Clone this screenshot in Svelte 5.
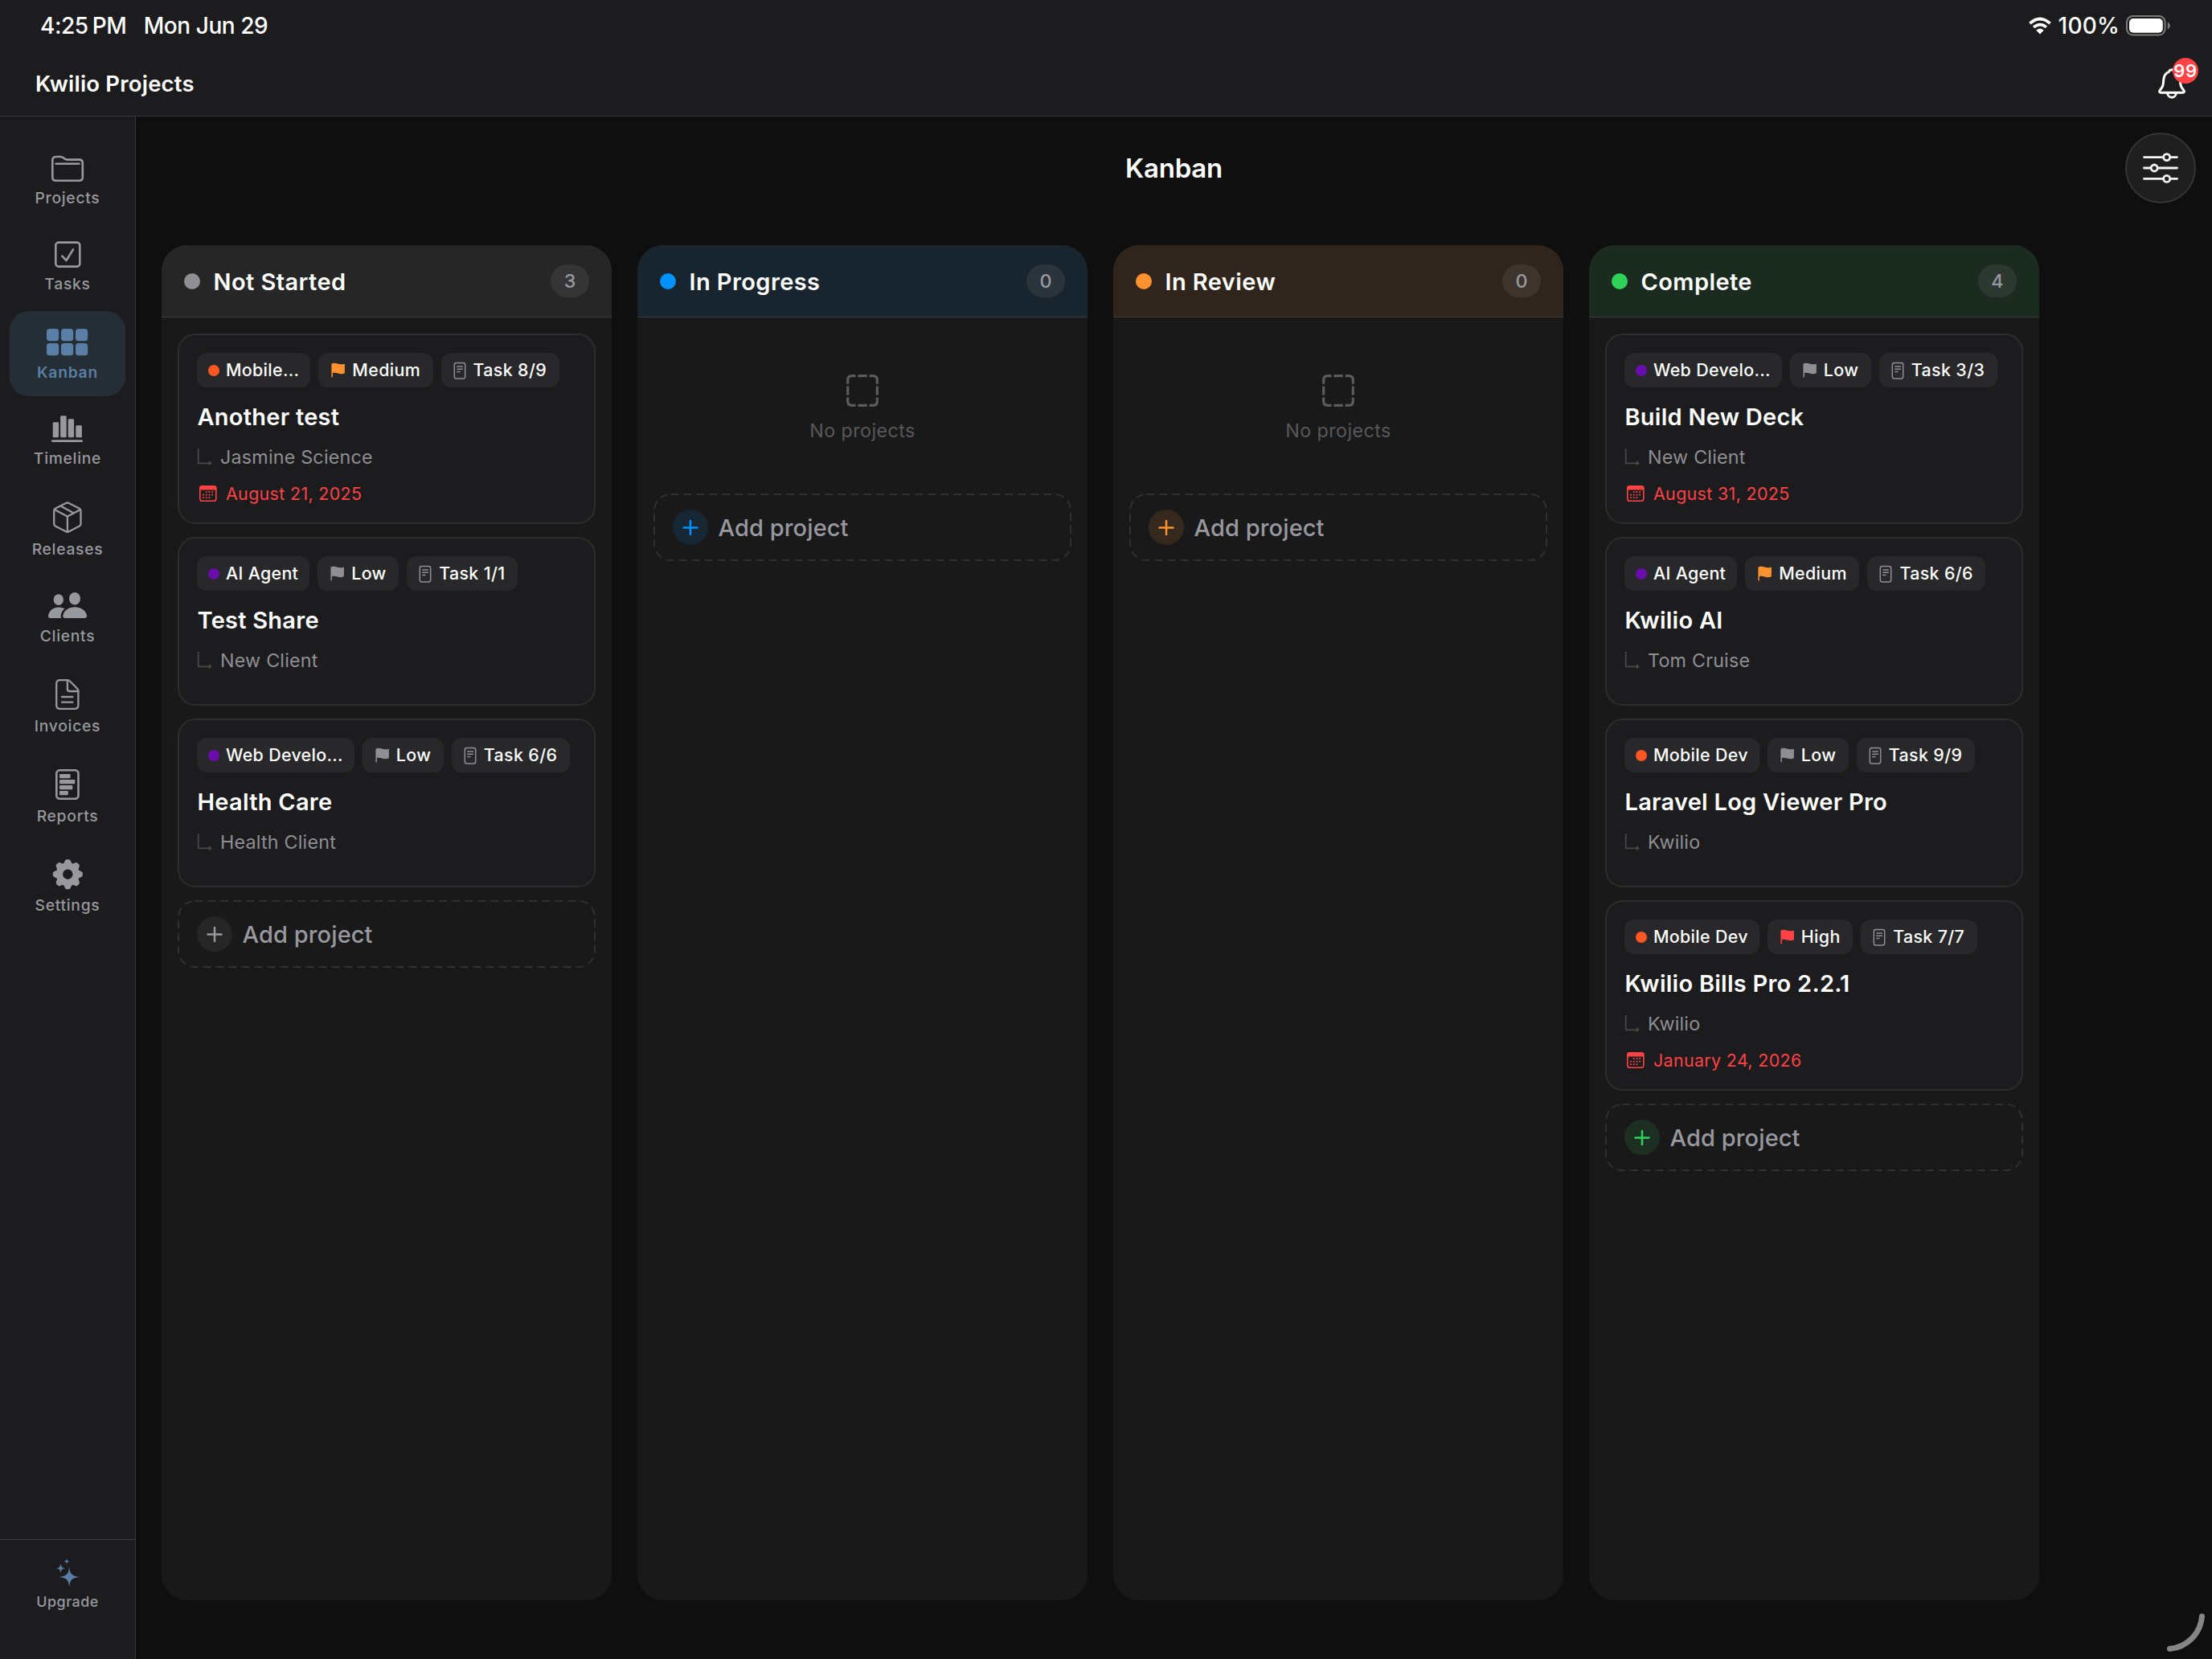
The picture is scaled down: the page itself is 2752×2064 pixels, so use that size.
<script>
	const navItems = [
		{ id: 'projects', label: 'Projects', h: 41 },
		{ id: 'tasks', label: 'Tasks', h: 42 },
		{ id: 'kanban', label: 'Kanban', h: 45 },
		{ id: 'timeline', label: 'Timeline', h: 42 },
		{ id: 'releases', label: 'Releases', h: 48 },
		{ id: 'clients', label: 'Clients', h: 43 },
		{ id: 'invoices', label: 'Invoices', h: 47 },
		{ id: 'reports', label: 'Reports', h: 47 },
		{ id: 'settings', label: 'Settings', h: 46 }
	];

	const ORANGE = '#ff5722';
	const PURPLE = '#6a0dad';

	const columns = [
		{
			name: 'Not Started',
			tone: 'gray',
			projects: [
				{ category: 'Mobile...', color: ORANGE, priority: 'Medium', tasks: '8/9', title: 'Another test', client: 'Jasmine Science', due: 'August 21, 2025' },
				{ category: 'AI Agent', color: PURPLE, priority: 'Low', tasks: '1/1', title: 'Test Share', client: 'New Client' },
				{ category: 'Web Develo...', color: PURPLE, priority: 'Low', tasks: '6/6', title: 'Health Care', client: 'Health Client' }
			]
		},
		{ name: 'In Progress', tone: 'blue', projects: [] },
		{ name: 'In Review', tone: 'orange', projects: [] },
		{
			name: 'Complete',
			tone: 'green',
			projects: [
				{ category: 'Web Develo...', color: PURPLE, priority: 'Low', tasks: '3/3', title: 'Build New Deck', client: 'New Client', due: 'August 31, 2025' },
				{ category: 'AI Agent', color: PURPLE, priority: 'Medium', tasks: '6/6', title: 'Kwilio AI', client: 'Tom Cruise' },
				{ category: 'Mobile Dev', color: ORANGE, priority: 'Low', tasks: '9/9', title: 'Laravel Log Viewer Pro', client: 'Kwilio' },
				{ category: 'Mobile Dev', color: ORANGE, priority: 'High', tasks: '7/7', title: 'Kwilio Bills Pro 2.2.1', client: 'Kwilio', due: 'January 24, 2026' }
			]
		}
	];

	const gearTeeth = [0, 45, 90, 135, 180, 225, 270, 315];

	// day dots in the calendar glyph
	const calendarDays = [
		[7.8, 7.2], [11.5, 7.2], [15.2, 7.2],
		[4.1, 10.8], [7.8, 10.8], [11.5, 10.8], [15.2, 10.8],
		[4.1, 14.3], [7.8, 14.3], [11.5, 14.3]
	];

	let active = $state('kanban');
</script>

{#snippet navIcon(id)}
	{#if id === 'projects'}
		<g class="line">
			<path d="M11.3 9.5Q11.3 5 15.6 5h5.6c1.6 0 2.5.4 3.6 1.3l1.5 1.2c1 .8 2 1.1 3.3 1.1h15q4.2 0 4.2 4.2v17.7q0 4.2-4.3 4.2H15.6q-4.3 0-4.3-4.2z" />
			<path d="M15.5 13.8h29" />
		</g>
	{:else if id === 'tasks'}
		<g class="line">
			<rect x="15.3" y="5.6" width="30" height="30" rx="3.6" />
			<path d="M23.3 22.6l5.2 5.4 8.5-13.6" />
		</g>
	{:else if id === 'kanban'}
		{#each [6, 24] as y}
			{#each [4, 22, 40] as x}
				<rect {x} {y} width="15.2" height="15.2" rx="3.8" />
			{/each}
		{/each}
	{:else if id === 'timeline'}
		<rect x="11.7" y="12.3" width="7.4" height="19" rx="1.4" />
		<rect x="21.1" y="4.3" width="7.6" height="27" rx="1.4" />
		<rect x="30.7" y="8.3" width="7.4" height="23" rx="1.4" />
		<rect x="40.3" y="16.3" width="7.6" height="15" rx="1.4" />
		<rect x="10" y="34.2" width="39" height="2.8" rx="1.2" />
	{:else if id === 'releases'}
		<g class="line thin">
			<path d="M27.9 6q2-1 4 0L45 12.8q1.5.8 1.5 2.6v16.4q0 1.8-1.6 2.7L31.9 41.3q-2 1-4 0L14.8 34.5q-1.6-.9-1.6-2.7V15.4q0-1.8 1.5-2.6z" />
			<path d="M13.8 14l16.1 8.6L46 14M29.9 22.6V42M21.8 9.8l16.2 8.6" />
		</g>
	{:else if id === 'clients'}
		<ellipse cx="18.8" cy="13.1" rx="6.2" ry="6.8" />
		<ellipse cx="39" cy="11.7" rx="7" ry="7.8" />
		<path d="M8.5 36Q6 36 6 33.8C6 28.5 11.2 22.5 19 22.5q4.2 0 7.6 1.8C23.2 27 21.4 30.6 21.6 34q0 1 .6 2z" />
		<path d="M27 36q-2.7 0-2.7-2.4C24.3 28.5 30 22.3 39.1 22.3S54 28.5 54 33.6Q54 36 51.3 36z" />
	{:else if id === 'invoices'}
		<g class="line thin">
			<path d="M20.8 5.2h9q1.9 0 3.2 1.3l9 9q1.4 1.4 1.4 3.2v17.5q0 4.6-4.6 4.6h-18q-4.6 0-4.6-4.6V9.8q0-4.6 4.6-4.6z" />
			<path d="M29.9 5.4v11q0 2.6 2.6 2.6h10.8M23 26h13.4M23 32.6h13.4" />
		</g>
	{:else if id === 'reports'}
		<rect class="line" x="16.3" y="5.3" width="27.2" height="35.4" rx="4" />
		<rect x="20" y="10" width="13.6" height="5.2" rx="1" />
		<rect x="20" y="17" width="19.3" height="5.2" rx="1" />
		<rect x="20" y="24" width="16.3" height="5.2" rx="1" />
		<rect x="20" y="31" width="10.8" height="5.2" rx="1" />
	{:else if id === 'settings'}
		<g transform="translate(30.3 22.7)">
			<circle r="10.3" fill="none" stroke="currentColor" stroke-width="8.2" />
			{#each gearTeeth as angle}
				<path transform="rotate({angle})" d="M-5.6-12.5L-3.4-17Q-2.8-18.5-1.4-18.5H1.4Q2.8-18.5 3.4-17L5.6-12.5z" />
			{/each}
		</g>
	{/if}
{/snippet}

{#snippet flag()}
	<svg class="flag" width="20" height="20" viewBox="0 0 20 20">
		<path d="M2.4 2.2C2.4 1.4 4.1.8 6.1.8c3.3 0 5 1.5 8.4 1.5 1.4 0 2.6-.3 3.4-.6.6-.2 1 .1 1 .7v10.2c0 .9-1.7 1.7-4.1 1.7-3.5 0-5.3-1.5-8.5-1.5-1.1 0-1.9.2-2.4.3v4.7a.75.75 0 0 1-1.5 0z" />
	</svg>
{/snippet}

{#snippet addProject(tone)}
	<button class="add {tone}">
		<svg class="dashes" width="520" height="84">
			<rect x="1" y="1" width="518" height="82" rx="20" />
		</svg>
		<span class="add-icon">
			<svg width="20" height="20" viewBox="0 0 20 20"><path d="M10 2v17M1.5 10.5h17" /></svg>
		</span>
		<span>Add project</span>
	</button>
{/snippet}

<div class="app">
	<header class="top">
		<div class="status-bar">
			<div class="clock">
				<span>4:25<span class="meridiem">PM</span></span>
				<span>Mon Jun 29</span>
			</div>
			<div class="system">
				<svg width="30" height="22" viewBox="0 0 30 22">
					<path d="M15 21l-4.2-4.2Q15 13.2 19.2 16.8z" fill="#fff" stroke="#fff" stroke-width="1" stroke-linejoin="round" />
					<path d="M7.1 12.9Q15 6.2 22.9 12.9M2.4 8.2Q15-3.2 27.6 8.2" fill="none" stroke="#fff" stroke-width="3.7" />
				</svg>
				<span>100%</span>
				<svg width="55" height="26" viewBox="0 0 55 26">
					<rect x="1" y="1" width="47.6" height="23.6" rx="7.5" fill="none" stroke="#7b7b7d" stroke-width="2" />
					<rect x="4" y="4" width="41.8" height="17.8" rx="5" fill="#fff" />
					<path d="M51.8 8.6q3 1.4 3 4.3t-3 4.3z" fill="#7b7b7d" />
				</svg>
			</div>
		</div>
		<div class="app-bar">
			<h1>Kwilio Projects</h1>
			<button class="bell" aria-label="Notifications">
				<svg width="36" height="40" viewBox="0 0 36 40">
					<path d="M18 2.7c-1.9 0-3.1 1-3.6 2.7C10 7 8 10.8 7.7 15.6 7.4 22 6.7 24.2 3.6 27.7c-1.7 2-1.2 3.5 1 3.5h26.8c2.2 0 2.7-1.5 1-3.5-3.1-3.5-3.8-5.7-4.1-12.1C28 10.8 26 7 21.6 5.4 21.1 3.7 19.9 2.7 18 2.7z" />
					<path d="M12.7 31.4c0 3.4 2.3 5.8 5.3 5.8s5.3-2.4 5.3-5.8" />
				</svg>
				<span class="badge">99</span>
			</button>
		</div>
	</header>

	<div class="body">
		<aside>
			<nav>
				{#each navItems as item}
					<button class="nav-item" class:active={active === item.id} onclick={() => (active = item.id)}>
						<svg width="60" height={item.h} viewBox="0 0 60 {item.h}">{@render navIcon(item.id)}</svg>
						<span>{item.label}</span>
					</button>
				{/each}
			</nav>
			<button class="upgrade">
				<svg width="32" height="38" viewBox="0 0 32 38">
					<path d="M18.2 11.3c.9 9 3.2 11.6 12.5 12.6-9.3 1-11.6 3.6-12.5 12.6-.9-9-3.2-11.6-12.5-12.6 9.3-1 11.6-3.6 12.5-12.6z" />
					<path d="M7.5 6.9c.5 4.3 1.7 5.7 6.2 6.2-4.5.5-5.7 1.9-6.2 6.2-.5-4.3-1.7-5.7-6.2-6.2 4.5-.5 5.7-1.9 6.2-6.2z" />
					<path d="M15.1.5c.3 2.9 1.1 3.7 4 4-2.9.3-3.7 1.1-4 4-.3-2.9-1.1-3.7-4-4 2.9-.3 3.7-1.1 4-4z" />
				</svg>
				<span>Upgrade</span>
			</button>
		</aside>

		<main>
			<div class="title-bar">
				<h2>Kanban</h2>
				<button class="filter" aria-label="Filter">
					<svg width="44" height="38" viewBox="0 0 44 38">
						<path d="M1.5 5.6h22.9M35 5.6h7.5M1.5 19h7.4M19.5 19h23M1.5 32.4h22.9M35 32.4h7.5" />
						<circle cx="29.7" cy="5.6" r="4" />
						<circle cx="14.2" cy="19" r="4" />
						<circle cx="29.7" cy="32.4" r="4" />
					</svg>
				</button>
			</div>

			<div class="board">
				{#each columns as column}
					<section class="column">
						<header class="column-head {column.tone}">
							<span class="dot"></span>
							<h3>{column.name}</h3>
							<span class="count">{column.projects.length}</span>
						</header>

						<div class="cards">
							{#each column.projects as project}
								<article class="card">
									<div class="chips">
										<span class="chip category">
											<span class="swatch" style="background: {project.color}"></span>
											<span class="chip-text">{project.category}</span>
										</span>
										<span class="chip {project.priority.toLowerCase()}">
											{@render flag()}
											<span class="chip-text">{project.priority}</span>
										</span>
										<span class="chip">
											<svg width="18" height="22" viewBox="0 0 18 22" class="task-icon">
												<rect x="2.3" y="1.5" width="13.4" height="19.4" rx="2.4" />
												<path d="M5.3 6h7.6M5.3 9.3h7.6M5.3 12.6h4.2" />
											</svg>
											<span class="chip-text">Task {project.tasks}</span>
										</span>
									</div>
									<h4>{project.title}</h4>
									<div class="client">
										<svg width="20" height="22" viewBox="0 0 20 22">
											<path d="M1.7 0v18.3h14" />
											<path class="tip" d="M15 15l3.8 3.3L15 21.6z" />
										</svg>
										{project.client}
									</div>
									{#if project.due}
										<div class="due">
											<svg width="22" height="20" viewBox="0 0 22 20">
												<rect x=".8" y=".8" width="20" height="18.4" rx="2.8" />
												<path class="solid" d="M.8 4.6V3.5Q.8.8 3.5.8h14.6q2.7 0 2.7 2.7v1.1z" />
												{#each calendarDays as [x, y]}
													<rect class="solid day" {x} {y} width="1.9" height="1.7" />
												{/each}
											</svg>
											{project.due}
										</div>
									{/if}
								</article>
							{:else}
								<div class="empty">
									<svg width="40" height="40" viewBox="0 0 40 40">
										<path d="M1.7 11.8V6.7q0-5 5-5h4.8M14.4 1.7h11.4M28.7 1.7h4.6q5 0 5 5v5.1M38.3 14.6v11M38.3 28.6v4.7q0 5-5 5h-4.6M25.8 38.3H14.4M11.5 38.3H6.7q-5 0-5-5v-4.7M1.7 25.6v-11" />
									</svg>
									<p>No projects</p>
								</div>
							{/each}
							{@render addProject(column.tone)}
						</div>
					</section>
				{/each}
			</div>
			<svg class="corner" width="50" height="50" viewBox="0 0 50 50">
				<path d="M4.5 45.3A44 44 0 0 0 44.5 5" />
			</svg>
		</main>
	</div>
</div>

<style>
	:global(body) {
		background: #0f0f0f;
	}

	.app {
		display: flex;
		flex-direction: column;
		width: 2752px;
		height: 2064px;
		overflow: hidden;
		background: #0f0f0f;
		color: #fff;
		font-family: Inter, 'Noto Sans', sans-serif;
	}

	h1,
	h2,
	h3,
	h4,
	p {
		margin: 0;
		font-weight: 570;
	}

	button {
		margin: 0;
		padding: 0;
		border: none;
		background: none;
		color: inherit;
		font: inherit;
		letter-spacing: inherit;
		cursor: pointer;
	}

	svg {
		display: block;
		flex-shrink: 0;
	}

	.top {
		box-sizing: border-box;
		height: 145px;
		background: #1c1c1e;
		border-bottom: 1px solid #353537;
	}

	.status-bar {
		display: flex;
		justify-content: space-between;
		align-items: center;
		height: 64px;
		padding: 0 52px 0 50px;
		font-size: 28px;
		font-weight: 480;
		letter-spacing: -0.45px;
	}

	.clock {
		display: flex;
		gap: 21.5px;
	}

	.meridiem {
		margin-left: 5px;
	}

	.system {
		display: flex;
		align-items: center;
		gap: 8px;
		letter-spacing: 0.2px;
	}

	.app-bar {
		display: flex;
		justify-content: space-between;
		align-items: center;
		height: 80px;
		padding: 0 32px 0 44px;
	}

	h1 {
		font-size: 27.5px;
		letter-spacing: 0.2px;
	}

	.bell {
		position: relative;
	}

	.bell svg {
		fill: none;
		stroke: #fff;
		stroke-width: 3;
		stroke-linejoin: round;
	}

	.badge {
		position: absolute;
		top: -12px;
		left: 19px;
		width: 32px;
		height: 32px;
		border-radius: 50%;
		background: #ff4245;
		font-size: 22px;
		font-weight: 600;
		line-height: 32px;
		letter-spacing: 0.6px;
		text-align: center;
	}

	.body {
		display: flex;
		flex: 1;
		min-height: 0;
	}

	aside {
		display: flex;
		flex-direction: column;
		justify-content: space-between;
		width: 168px;
		background: #1c1c1e;
		border-right: 1px solid #353537;
		color: #98989f;
	}

	nav {
		display: flex;
		flex-direction: column;
		gap: 4px;
		padding: 29px 12px 0;
	}

	.nav-item {
		display: flex;
		flex-direction: column;
		align-items: center;
		gap: 3px;
		padding: 16px 0 18px;
		border-radius: 24px;
		font-size: 19.3px;
		font-weight: 480;
		line-height: 24px;
		letter-spacing: 0.72px;
	}

	.nav-item svg {
		fill: currentColor;
	}

	.nav-item.active {
		background: #252d35;
		color: #5a7fa6;
	}

	.nav-item.active span {
		font-weight: 570;
	}

	.line {
		fill: none;
		stroke: currentColor;
		stroke-width: 2.6;
		stroke-linecap: round;
		stroke-linejoin: round;
	}

	.line.thin {
		stroke-width: 2.3;
	}

	.upgrade {
		box-sizing: border-box;
		display: flex;
		flex-direction: column;
		align-items: center;
		height: 149px;
		padding-top: 22px;
		border-top: 1px solid #3c3c3e;
		font-size: 17.9px;
		font-weight: 480;
		line-height: 24px;
		letter-spacing: 0.5px;
	}

	.upgrade svg {
		fill: #5a7fa6;
		margin-bottom: 5px;
	}

	main {
		position: relative;
		display: flex;
		flex: 1;
		flex-direction: column;
	}

	.title-bar {
		display: grid;
		grid-template-columns: 1fr auto 1fr;
		align-items: center;
		height: 128px;
		padding: 0 20px;
	}

	h2 {
		grid-column: 2;
		font-size: 33px;
		letter-spacing: -0.25px;
	}

	.filter {
		display: grid;
		place-items: center;
		justify-self: end;
		box-sizing: border-box;
		width: 88px;
		height: 88px;
		border: 2px solid #353535;
		border-radius: 50%;
		background: #1f1f1f;
	}

	.filter svg {
		fill: none;
		stroke: #f5f5f5;
		stroke-width: 2.8;
		stroke-linecap: round;
	}

	.board {
		display: flex;
		gap: 32px;
		padding: 32px 32px 0;
	}

	.column {
		width: 560px;
		height: 1686px;
		overflow: hidden;
		border-radius: 32px;
		background: #191919;
	}

	.column-head {
		display: flex;
		align-items: center;
		height: 89px;
		padding: 0 28px;
		border-bottom: 1px solid #3b3b3d;
	}

	.column-head .dot {
		width: 20px;
		height: 20px;
		margin-right: 16.5px;
		border-radius: 50%;
	}

	h3 {
		padding-top: 1px;
		font-size: 29px;
		letter-spacing: 0.42px;
	}

	.count {
		width: 48px;
		height: 41px;
		margin-left: auto;
		border-radius: 20.5px;
		background: rgba(120, 120, 128, 0.18);
		color: #98989f;
		font-size: 23.3px;
		font-weight: 500;
		line-height: 41px;
		text-align: center;
	}

	.column-head.gray {
		background: #262626;
	}

	.column-head.blue {
		background: #18252f;
	}

	.column-head.orange {
		background: #30251c;
	}

	.column-head.green {
		background: #1c2b20;
	}

	.gray .dot {
		background: #8e8e93;
	}

	.blue .dot {
		background: #0091ff;
	}

	.orange .dot {
		background: #ff9230;
	}

	.green .dot {
		background: #30d158;
	}

	.cards {
		display: flex;
		flex-direction: column;
		gap: 16px;
		padding: 20px;
	}

	.card {
		box-sizing: border-box;
		min-height: 210px;
		padding: 22px;
		border: 2px solid #2d2d2f;
		border-radius: 22px;
		background: #1c1c1e;
	}

	.chips {
		display: flex;
		gap: 10px;
	}

	.chip {
		display: flex;
		align-items: center;
		gap: 8px;
		height: 43px;
		padding: 0 15.5px 0 14px;
		border-radius: 12px;
		background: #28282a;
		font-size: 21.4px;
		font-weight: 480;
		letter-spacing: 0.36px;
		white-space: nowrap;
	}

	.category {
		gap: 8px;
		padding-right: 14px;
		letter-spacing: 0.32px;
	}

	.chip-text {
		padding-bottom: 2px;
	}

	.swatch {
		width: 14px;
		height: 14px;
		border-radius: 50%;
	}

	.low .flag {
		fill: #8e8e93;
	}

	.medium .flag {
		fill: #ff9230;
	}

	.high .flag {
		fill: #ff4245;
	}

	.task-icon {
		fill: none;
		stroke: #8e8e93;
		stroke-width: 1.5;
	}

	h4 {
		margin-top: 19px;
		padding-left: 0.5px;
		font-size: 29px;
		line-height: 36px;
		letter-spacing: 0.25px;
	}

	.client {
		display: flex;
		align-items: center;
		gap: 9px;
		margin-top: 17px;
		color: #8e8e93;
		font-size: 23.3px;
		line-height: 30px;
		letter-spacing: 0.2px;
	}

	.client svg {
		fill: none;
		stroke: #48484a;
		stroke-width: 1.7;
	}

	.client .tip {
		fill: #48484a;
		stroke: none;
	}

	.due {
		display: flex;
		align-items: center;
		gap: 11.5px;
		margin-top: 16px;
		padding-left: 2.5px;
		color: #ff4245;
		font-size: 21.4px;
		line-height: 28px;
		letter-spacing: 0.36px;
	}

	.due svg {
		fill: none;
		stroke: #ff4245;
		stroke-width: 1.6;
	}

	.due .solid {
		fill: #ff4245;
	}

	.due .day {
		stroke: none;
	}

	.empty {
		box-sizing: border-box;
		display: flex;
		flex-direction: column;
		align-items: center;
		height: 183px;
		padding-top: 51px;
	}

	.empty svg {
		fill: none;
		stroke: #5c5c5e;
		stroke-width: 3.2;
	}

	.empty p {
		margin-top: 15px;
		color: #58585a;
		font-size: 23.3px;
		font-weight: 400;
		line-height: 30px;
		letter-spacing: 0.4px;
	}

	.add {
		position: relative;
		display: flex;
		align-items: center;
		gap: 12.5px;
		height: 84px;
		padding-left: 24px;
		color: #98989f;
		font-size: 29px;
		font-weight: 450;
		letter-spacing: 0.1px;
	}

	.dashes {
		position: absolute;
		inset: 0;
		fill: none;
		stroke: #303032;
		stroke-width: 2;
		stroke-dasharray: 10 6;
	}

	.add-icon {
		display: grid;
		place-items: center;
		width: 44px;
		height: 44px;
		border-radius: 50%;
		background: #262627;
	}

	.add-icon svg {
		fill: none;
		stroke: #98989f;
		stroke-width: 2.5;
		stroke-linecap: round;
	}

	.add.blue .add-icon {
		background: #172834;
	}

	.add.blue .add-icon svg {
		stroke: #0091ff;
	}

	.add.orange .add-icon {
		background: #35281c;
	}

	.add.orange .add-icon svg {
		stroke: #ff9230;
	}

	.add.green .add-icon {
		background: #1d2f22;
	}

	.add.green .add-icon svg {
		stroke: #30d158;
	}

	.corner {
		position: absolute;
		right: 7px;
		bottom: 8px;
		fill: none;
		stroke: #868686;
		stroke-width: 7;
		stroke-linecap: round;
	}
</style>
